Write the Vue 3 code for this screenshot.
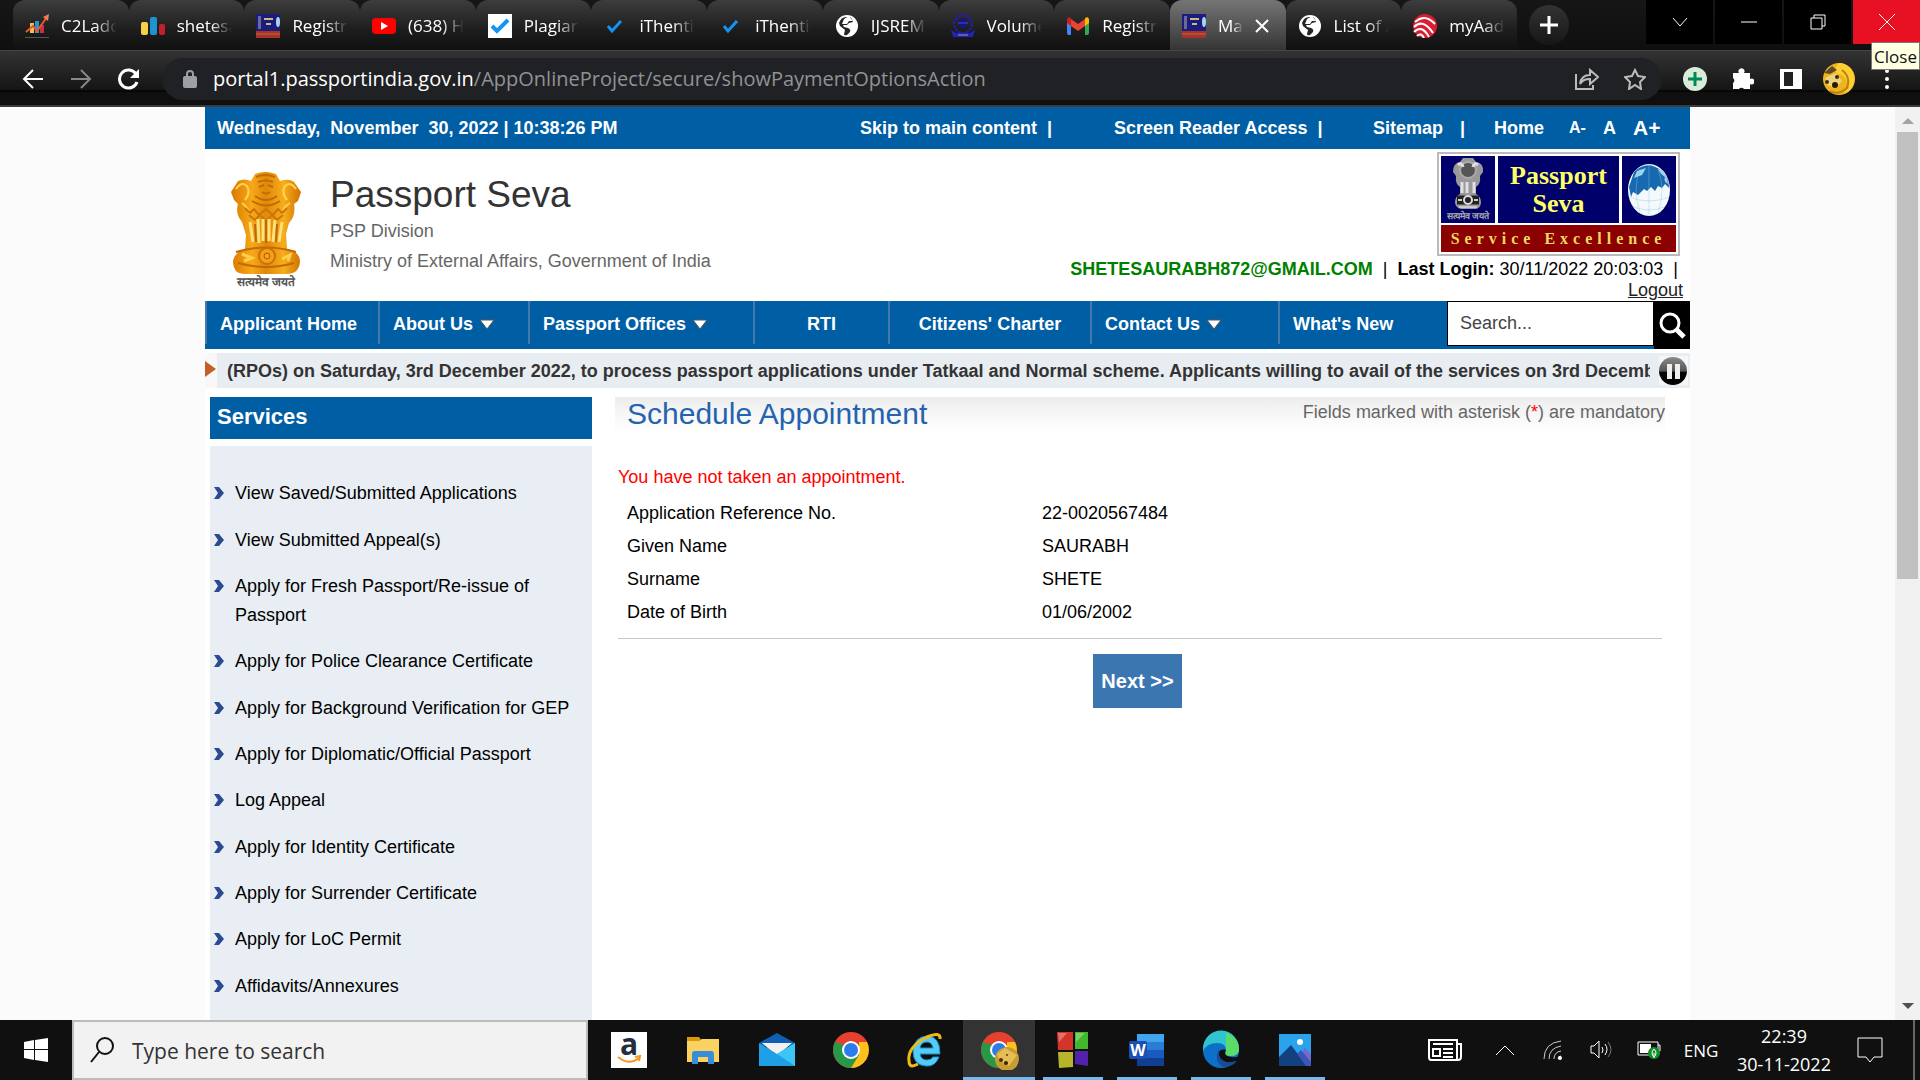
<script setup>
const tabs = [
  { title: 'C2Ladder', icon: 'chart' },
  { title: 'shetesaurabh', icon: 'bars' },
  { title: 'Registration', icon: 'seva' },
  { title: '(638) How to', icon: 'youtube' },
  { title: 'Plagiarism', icon: 'checkbox' },
  { title: 'iThenticate', icon: 'check' },
  { title: 'iThenticate', icon: 'check' },
  { title: 'IJSREM Journal', icon: 'globe' },
  { title: 'Volume 6', icon: 'crest' },
  { title: 'Registration', icon: 'gmail' },
  { title: 'Ma', icon: 'seva', active: true },
  { title: 'List of Annexures', icon: 'globe' },
  { title: 'myAadhaar', icon: 'aadhaar' },
]

const nav = [
  { label: 'Applicant Home' },
  { label: 'About Us', menu: true },
  { label: 'Passport Offices', menu: true },
  { label: 'RTI', wide: 'rti' },
  { label: "Citizens' Charter", wide: 'charter' },
  { label: 'Contact Us', menu: true },
  { label: "What's New" },
]

const services = [
  'View Saved/Submitted Applications',
  'View Submitted Appeal(s)',
  'Apply for Fresh Passport/Re-issue of Passport',
  'Apply for Police Clearance Certificate',
  'Apply for Background Verification for GEP',
  'Apply for Diplomatic/Official Passport',
  'Log Appeal',
  'Apply for Identity Certificate',
  'Apply for Surrender Certificate',
  'Apply for LoC Permit',
  'Affidavits/Annexures',
]

const details = [
  ['Application Reference No.', '22-0020567484'],
  ['Given Name', 'SAURABH'],
  ['Surname', 'SHETE'],
  ['Date of Birth', '01/06/2002'],
]

const apps = [
  { name: 'Amazon', icon: 'amazon' },
  { name: 'File Explorer', icon: 'folder' },
  { name: 'Mail', icon: 'mail' },
  { name: 'Chrome', icon: 'chrome' },
  { name: 'Internet Explorer', icon: 'ie' },
  { name: 'Chrome window', icon: 'chrome', state: 'current', badge: true },
  { name: 'Panes', icon: 'panes', state: 'open' },
  { name: 'Word', icon: 'word', state: 'open' },
  { name: 'Edge', icon: 'edge', state: 'open' },
  { name: 'Photos', icon: 'photos', state: 'open' },
]
</script>

<template>
  <div class="screen">
    <header class="browser">
      <div class="tabstrip">
        <div class="tabs">
          <div v-for="(tab, i) in tabs" :key="i" class="tab" :class="{ active: tab.active }">
            <svg class="favicon" viewBox="0 0 24 24" aria-hidden="true">
              <template v-if="tab.icon === 'chart'">
                <path d="M0 23.500h24" stroke="#555" />
                <path d="M5 9h4v10H5z" fill="#f2c14b" /><path d="M10 7h4v12h-4z" fill="#2496d4" /><path d="M15 11h4v8h-4z" fill="#c8323c" />
                <path d="M1 18l7-6 4 5L22 3" fill="none" stroke="#e8582c" stroke-width="2" /><path d="M18 3l6-3-1 7z" fill="#f08050" />
              </template>
              <template v-else-if="tab.icon === 'bars'">
                <rect x="0" y="8" width="7" height="13" rx="2" fill="#f8cf4a" /><rect x="9" y="3" width="7" height="18" rx="2" fill="#1f93d0" /><rect x="18" y="10" width="6" height="11" rx="2" fill="#c01f2c" />
              </template>
              <template v-else-if="tab.icon === 'seva'">
                <path d="M0 0h24v17H0z" fill="#1c1c7c" /><path d="M0 17h24v7H0z" fill="#a53328" />
                <path d="M2 2h3v13H2z" fill="#6a6a98" /><path d="M8 4h9v2H8zM10 9h5v2h-5z" fill="#c9bb83" /><ellipse cx="22" cy="8" rx="2" ry="5" fill="#a7d5f0" /><path d="M0 20h24" stroke="#c6683a" />
              </template>
              <template v-else-if="tab.icon === 'youtube'">
                <rect y="4" width="24" height="16" rx="4" fill="#f00" /><path d="M9 8l7 4-7 4z" fill="#fff" />
              </template>
              <template v-else-if="tab.icon === 'checkbox'">
                <path d="M0 0h24v24H0z" fill="#fff" /><path d="M4 12l5 5L20 6" fill="none" stroke="#1593f5" stroke-width="4" />
              </template>
              <path v-else-if="tab.icon === 'check'" d="M5 12l4 5 9-10" fill="none" stroke="#1593f5" stroke-width="3" />
              <template v-else-if="tab.icon === 'globe'">
                <circle cx="12" cy="12" r="11" fill="#fff" />
                <path d="M15 3q3 2 3 5l-4 1-2 2H8l1 2 4 1q3 1 2 4l-3 3q-3 1-3-1l1-4-5-4-1-3q2-6 7-6z" fill="#262626" />
                <path d="M14 2l-5 3-2 5h5l2-3h4z" fill="#fff" />
              </template>
              <template v-else-if="tab.icon === 'crest'">
                <circle cx="12" cy="10" r="9" fill="none" stroke="#2020a8" stroke-width="2" stroke-dasharray="3 1" /><circle cx="12" cy="9" r="5" fill="#171775" /><path d="M7 9h10" stroke="#2d2dbb" stroke-width="2" /><path d="M0 16l5 3h14l5-3-2 7H2z" fill="#2222b8" /><path d="M7 21h10" stroke="#99a" />
              </template>
              <template v-else-if="tab.icon === 'gmail'">
                <path d="M1 6l4 2v13H3a2 2 0 0 1-2-2z" fill="#4285f4" /><path d="M23 6l-4 2v13h2a2 2 0 0 0 2-2z" fill="#34a853" /><path d="M5 5l7 5 7-5v7l-7 5-7-5z" fill="#ea4335" /><path d="M1 6c0-4 4-3 4-1v7l-4-3z" fill="#c5221f" /><path d="M23 6c0-4-4-3-4-1v7l4-3z" fill="#fbbc04" />
              </template>
              <template v-else>
                <circle cx="12" cy="12" r="12" fill="#d81f32" /><path d="M2 8Q12-1 22 10M1 13q9-9 19 6M1 18q8-8 15 5M4 22q4-4 7 2" fill="none" stroke="#fff" stroke-width="2" />
              </template>
            </svg>
            <span class="tab-title">{{ tab.title }}</span>
            <button v-if="tab.active" class="tab-close" aria-label="Close tab">
              <svg width="14" height="14" viewBox="0 0 14 14"><path d="M1 1l12 12M13 1L1 13" stroke="#fff" stroke-width="2" /></svg>
            </button>
          </div>
        </div>
        <button class="new-tab" aria-label="New tab">
          <svg width="18" height="18" viewBox="0 0 18 18"><path d="M9 0v18M0 9h18" stroke="#fff" stroke-width="3" /></svg>
        </button>
        <div class="caption">
          <button aria-label="Search tabs"><svg width="16" height="16" viewBox="0 0 16 16"><path d="M1 4l7 8 7-8" /></svg></button>
          <button aria-label="Minimize"><svg width="16" height="16" viewBox="0 0 16 16"><path d="M0 8h16" /></svg></button>
          <button aria-label="Restore"><svg width="16" height="16" viewBox="0 0 16 16"><path d="M1 4h11v11H1zM4 4V1h11v11h-3" /></svg></button>
          <button class="close" aria-label="Close window"><svg width="16" height="16" viewBox="0 0 16 16"><path d="M0 0l16 16M16 0L0 16" /></svg></button>
          <span class="tooltip">Close</span>
        </div>
      </div>

      <div class="toolbar">
        <button aria-label="Back"><svg width="22" height="20" viewBox="0 0 22 20"><path d="M21 10H3M11 1l-9 9 9 9" fill="none" stroke="#fff" stroke-width="2" /></svg></button>
        <button aria-label="Forward"><svg width="22" height="20" viewBox="0 0 22 20"><path d="M1 10h18M11 1l9 9-9 9" fill="none" stroke="#888" stroke-width="2" /></svg></button>
        <button aria-label="Reload"><svg width="22" height="22" viewBox="0 0 22 22"><path d="M19 14a9 9 0 1 1-1-8" fill="none" stroke="#fff" stroke-width="3" /><path d="M21 1v9h-9z" fill="#fff" /></svg></button>
        <div class="omnibox">
          <svg width="14" height="18" viewBox="0 0 14 18"><rect y="6" width="14" height="12" rx="2" fill="#9aa0a6" /><path d="M4 7V4a3 3 0 0 1 6 0v3" fill="none" stroke="#9aa0a6" stroke-width="2" /></svg>
          <div class="url" role="textbox" aria-label="Address" contenteditable="true"><b>portal1.passportindia.gov.in</b>/AppOnlineProject/secure/showPaymentOptionsAction</div>
          <button aria-label="Share"><svg width="24" height="22" viewBox="0 0 24 22"><path d="M1 6v15h17v-4M5 16c1-7 5-9 10-9V2l8 7-8 7v-5c-5 0-7 1-10 5z" fill="none" stroke="#bbb" stroke-width="2" /></svg></button>
          <button aria-label="Bookmark"><svg width="22" height="22" viewBox="0 0 22 22"><path d="M11 2l3 6 7 1-5 5 1 7-6-4-6 4 1-7-5-5 7-1z" fill="none" stroke="#bbb" stroke-width="2" /></svg></button>
        </div>
        <div class="extensions">
          <button aria-label="Add extension"><svg width="24" height="24" viewBox="0 0 24 24"><circle cx="12" cy="12" r="12" fill="#d9ecd9" /><path d="M12 5v14M5 12h14" stroke="#00875a" stroke-width="3" /></svg></button>
          <button aria-label="Extensions"><svg width="22" height="22" viewBox="0 0 22 22"><path d="M1 5h6a3 3 0 1 1 5 0h6v6a3 3 0 1 1 0 5v5h-6a3 3 0 0 0-5 0H1v-6a3 3 0 0 0 0-5z" fill="#fff" /></svg></button>
          <button aria-label="Side panel"><svg width="22" height="22" viewBox="0 0 22 22"><path d="M0 1h22v20H0z" fill="#fff" /><path d="M4 4h9v14H4z" fill="#222" /></svg></button>
          <button aria-label="Profile"><svg width="34" height="34" viewBox="0 0 34 34"><circle cx="17" cy="17" r="16" fill="#eeb41c" /><path d="M17 1a16 16 0 0 1 5 31c8-10 0-20-5-20s-4-8 0-11z" fill="#ffcf32" /><path d="M2 11l8-7 5 4-7 4z" fill="#5b4a2c" /><path d="M3 16l11-5 6 8-6 7-9-3z" fill="#ecd27e" /><circle cx="5" cy="20" r="2" fill="#3d2b12" /><circle cx="13" cy="23" r="3" fill="#2b1808" /><circle cx="15" cy="15" r="2" fill="#3d2b12" /><path d="M8 29q9 5 18-4M20 8q9 7 5 18" fill="none" stroke="#b9810f" stroke-width="2" /></svg></button>
          <button aria-label="Menu"><svg width="6" height="22" viewBox="0 0 6 22"><circle cx="3" cy="3" r="2" fill="#fff" /><circle cx="3" cy="11" r="2" fill="#fff" /><circle cx="3" cy="19" r="2" fill="#fff" /></svg></button>
        </div>
      </div>
    </header>

    <div class="viewport">
      <div class="page">
        <div class="topbar">
          <span class="today">Wednesday,&nbsp; November&nbsp; 30, 2022 | 10:38:26 PM</span>
          <div class="toplinks">
            <div><a href="#main">Skip to main content</a><i>|</i></div>
            <div><a href="#reader">Screen Reader Access</a><i>|</i></div>
            <div class="sitemap"><a href="#sitemap">Sitemap</a><i>|</i></div>
            <div><a href="#home">Home</a></div>
            <div><button class="small">A-</button></div>
            <div><button>A</button></div>
            <div><button class="large">A+</button></div>
          </div>
        </div>

        <div class="masthead">
          <div class="emblem">
            <svg width="72" height="102" viewBox="0 0 72 102" aria-hidden="true">
              <defs>
                <linearGradient id="gold" x1="0" x2="1"><stop offset="0" stop-color="#d87800" /><stop offset="0.300" stop-color="#f8a818" /><stop offset="0.500" stop-color="#e08808" /><stop offset="0.750" stop-color="#f7ad1c" /><stop offset="1" stop-color="#cf7200" /></linearGradient>
              </defs>
              <path d="M25 2q10-4 21 0l4 7q9-3 14 1l7 10-3 9-4 3q2 12-5 19l-3 11 1 15q13 3 13 12 0 7-5 11-5 3-29 3-25 0-29-3-4-4-4-11 1-8 12-12l1-14-4-13Q5 42 8 32l-4-4-3-8 7-11q6-3 13 0z" fill="url(#gold)" />
              <path d="M26 5q9-4 19 0M28 10q8-3 15 0M29 15l5-2M38 13l5 2M32 20q4 3 8 0M25 24q11 8 22 0M22 29q14 9 28 0" fill="none" stroke="#c06a08" stroke-width="2" />
              <path d="M6 17q5-8 11-3 4 7-2 14M66 17q-5-8-11-3-4 7 2 14M12 31q6 4 8 12M60 31q-7 4-8 12" fill="none" stroke="#ffd350" stroke-width="2" />
              <path d="M15 36l5 5 4-4 5 6 7-6 7 6 5-6 4 4 5-5M19 43l6 5 5-5 6 6 6-6 5 5 6-5" fill="none" stroke="#cd750a" stroke-width="2" />
              <path d="M20 50l3 20M28 47l1 24M33 47v22M39 47v22M45 48l-2 22M52 50l-3 20" stroke="#ffe27a" stroke-width="3" />
              <path d="M25 52l1 18M36 49v22M47 52l-1 18" stroke="#c06808" stroke-width="2" />
              <path d="M6 80q30-9 60 0M8 91q28 8 56 0" fill="none" stroke="#c06a04" stroke-width="2" />
              <circle cx="37" cy="84" r="8" fill="#f3a11a" stroke="#c87008" stroke-width="2" /><circle cx="37" cy="84" r="3" fill="none" stroke="#b45a00" />
              <path d="M12 82l10 4-8 3M52 87l8-4-2 6" fill="none" stroke="#ffd04c" stroke-width="3" />
            </svg>
            <span class="motto">सत्यमेव जयते</span>
          </div>
          <div class="brand">
            <h1>Passport Seva</h1>
            <p>PSP Division</p>
            <p>Ministry of External Affairs, Government of India</p>
          </div>
          <div class="account">
            <div class="seal">
              <div class="seal-emblem">
                <svg width="32" height="54" viewBox="0 0 32 54" aria-hidden="true">
                  <path d="M11 1h10l3 4q8 1 7 10l-3 4q1 8-4 11v7q5 2 5 9-1 6-6 6H9q-5-1-6-6 0-7 5-9v-7Q3 27 4 19l-3-4Q1 6 8 5z" fill="#999" />
                  <circle cx="16" cy="13" r="8" fill="#555" stroke="#aaa" stroke-width="2" /><path d="M6 8q4-3 5 2M26 8q-4-3-5 2M10 25v11M15 25v11M22 25v11" fill="none" stroke="#e0e0e0" stroke-width="3" />
                  <path d="M5 43h22" stroke="#222" stroke-width="9" /><circle cx="16" cy="43" r="4" fill="none" stroke="#ddd" stroke-width="2" /><path d="M6 43h4M22 43h4M7 50h18" stroke="#ccc" stroke-width="2" />
                </svg>
                <span>सत्यमेव जयते</span>
              </div>
              <div class="seal-name">Passport<br>Seva</div>
              <div class="seal-globe">
                <svg width="44" height="54" viewBox="0 0 44 54" aria-hidden="true">
                  <ellipse cx="22" cy="27" rx="21" ry="26" fill="#f4fafc" />
                  <path d="M7 9Q20-4 35 8q7 7 7 17l-4-4-3 4-4-2-3 5-4-4-4 4-3-2-6 6-5-3-2 5-2-10z" fill="#1769b0" />
                  <path d="M10 8l9-3-4 7-8 3zM31 5q9 5 10 16-5-3-3-7-6-4-7-9z" fill="#9fd3ed" />
                  <path d="M2 34q20 8 40 0M7 44q15 6 30 0M13 6q-8 21 0 43M31 6q8 21 0 43M22 1v52" fill="none" stroke="#8bc3e4" stroke-opacity="0.400" />
                </svg>
              </div>
              <div class="seal-line">Service Excellence</div>
            </div>
            <p class="login"><strong class="mail">SHETESAURABH872@GMAIL.COM</strong><i>|</i><strong>Last Login:</strong> 30/11/2022 20:03:03<i class="end">|</i></p>
            <a class="logout" href="#logout">Logout</a>
          </div>
        </div>

        <nav class="nav">
          <a v-for="item in nav" :key="item.label" href="#" :class="item.wide">
            {{ item.label }}
            <svg v-if="item.menu" width="16" height="12" viewBox="0 0 16 12"><path d="M1 1h14L8 10z" fill="#fff" stroke="#555" /></svg>
          </a>
          <form class="search" @submit.prevent>
            <input type="text" placeholder="Search..." aria-label="Search the site">
            <button aria-label="Search">
              <svg width="28" height="28" viewBox="0 0 28 28"><circle cx="12" cy="12" r="9" fill="none" stroke="#fff" stroke-width="3" /><path d="M18 18l8 8" stroke="#fff" stroke-width="5" /></svg>
            </button>
          </form>
        </nav>

        <div class="ticker">
          <svg class="pointer" width="12" height="20" viewBox="0 0 12 20"><path d="M0 0l11 8-11 8z" fill="#c2602a" /></svg>
          <div class="news"><span>(RPOs) on Saturday, 3rd December 2022, to process passport applications under Tatkaal and Normal scheme. Applicants willing to avail of the services on 3rd December 2022</span></div>
          <button aria-label="Pause">
            <svg width="29" height="29" viewBox="0 0 29 29"><defs><linearGradient id="knob" x2="0" y2="1"><stop offset="0" stop-color="#8b8b8b" /><stop offset="0.500" stop-color="#555" /><stop offset="0.550" stop-color="#050505" /><stop offset="1" stop-color="#000" /></linearGradient></defs><circle cx="14" cy="15" r="14" fill="url(#knob)" /><path d="M8 8h5v15H8zM16 8h5v15h-5z" fill="#eee" /></svg>
          </button>
        </div>

        <div class="columns">
          <aside class="services">
            <h2>Services</h2>
            <ul>
              <li v-for="item in services" :key="item">
                <svg width="10" height="12" viewBox="0 0 10 12"><path d="M0 0h5l5 6-5 6H0l4-6z" fill="#2b4a91" /></svg>
                <a href="#">{{ item }}</a>
              </li>
            </ul>
          </aside>

          <main id="main">
            <div class="title-row">
              <h2>Schedule Appointment</h2>
              <span>Fields marked with asterisk (<em>*</em>) are mandatory</span>
            </div>
            <p class="notice">You have not taken an appointment.</p>
            <table>
              <tbody>
                <tr v-for="[label, value] in details" :key="label">
                  <th scope="row">{{ label }}</th>
                  <td>{{ value }}</td>
                </tr>
              </tbody>
            </table>
            <hr>
            <div class="actions"><button class="next">Next &gt;&gt;</button></div>
          </main>
        </div>
      </div>

      <div class="scrollbar" aria-hidden="true">
        <svg width="12" height="7" viewBox="0 0 12 7"><path d="M0 7l6-6 6 6z" fill="#a3a3a3" /></svg>
        <div class="thumb"></div>
        <svg width="12" height="7" viewBox="0 0 12 7"><path d="M0 0h12L6 6z" fill="#505050" /></svg>
      </div>
    </div>

    <footer class="taskbar">
      <button class="start" aria-label="Start">
        <svg width="24" height="24" viewBox="0 0 24 24"><path d="M0 4l10-2v9H0zM11 2l13-2v11H11zM0 12h10v10L0 20zM11 12h13v12l-13-2z" fill="#fff" /></svg>
      </button>
      <label class="find">
        <svg width="24" height="26" viewBox="0 0 24 26"><circle cx="15" cy="9" r="8" fill="none" stroke="#111" stroke-width="2" /><path d="M9 15L1 25" stroke="#111" stroke-width="2" /></svg>
        <input type="text" placeholder="Type here to search" aria-label="Type here to search">
      </label>
      <div class="apps">
        <button v-for="app in apps" :key="app.name" :class="app.state" :aria-label="app.name">
          <svg width="40" height="40" viewBox="0 0 40 40">
            <template v-if="app.icon === 'amazon'">
              <path d="M2 2h36v36H2z" fill="#fff" />
              <text x="20" y="25" text-anchor="middle" class="amazon-a">a</text>
              <path d="M9 27q11 9 21 1" fill="none" stroke="#f79a1c" stroke-width="2" /><path d="M26 27l5-1-1 5" fill="none" stroke="#f79a1c" stroke-width="2" />
            </template>
            <template v-else-if="app.icon === 'folder'">
              <path d="M4 7h12l3 4H4z" fill="#dc9a08" /><path d="M4 11h12l3-2h17v23H4z" fill="#fbd161" />
              <path d="M9 34V24q0-3 3-3h16q3 0 3 3v10h-6v-7H15v7z" fill="#368ddb" />
            </template>
            <template v-else-if="app.icon === 'mail'">
              <path d="M2 13L20 3l18 10v3H2z" fill="#0f5fb2" /><path d="M5 13h30L20 26z" fill="#f1f1f1" /><path d="M2 13l18 11 18-11v23H2z" fill="#1f9fe6" /><path d="M38 13v23L20 24z" fill="#3cc6f5" />
            </template>
            <template v-else-if="app.icon === 'chrome'">
              <circle cx="20" cy="20" r="18" fill="#e8402f" /><path d="M4 12A18 18 0 0 0 20 38l8-13-8-8z" fill="#279847" /><path d="M36 12a18 18 0 0 1-16 26l8-13V12z" fill="#fcc11a" />
              <circle cx="20" cy="20" r="9" fill="#fff" /><circle cx="20" cy="20" r="7" fill="#2b7de9" />
              <template v-if="app.badge"><circle cx="28" cy="29" r="12" fill="#c79c32" /><path d="M18 24l8-6 12 7-8 11-9-5z" fill="#e6bd55" /><circle cx="22" cy="30" r="2" fill="#4a3010" /><circle cx="27" cy="33" r="2" fill="#3b2108" /><circle cx="28" cy="25" r="1" fill="#5a3a12" /></template>
            </template>
            <template v-else-if="app.icon === 'ie'">
              <path d="M35 24H15q1 6 7 6 4 0 6-3h6q-4 10-13 9Q8 35 8 21 9 7 22 6q13 0 13 18zM15 18h13q-1-6-6-6-6 0-7 6z" fill="#55ccf5" stroke="#168fd0" />
              <path d="M35 9Q36 1 22 7 2 17 4 31q0 8 9 3" fill="none" stroke="#f1ba13" stroke-width="3" />
            </template>
            <template v-else-if="app.icon === 'panes'">
              <path d="M4 2h16v18H5z" fill="#d5342a" /><path d="M22 2h13v17H22z" fill="#42b72c" /><path d="M5 22h15v15L6 38z" fill="#b9b52b" /><path d="M22 21h13v15l-13-2z" fill="#5322ab" /><path d="M5 3h9L6 12zM23 3h9l-9 9z" fill="#fff" fill-opacity="0.300" />
            </template>
            <template v-else-if="app.icon === 'word'">
              <path d="M10 4h27v8H10z" fill="#41a5ee" /><path d="M10 12h27v8H10z" fill="#2b7cd3" /><path d="M10 20h27v8H10z" fill="#185abd" /><path d="M10 28h27v8H10z" fill="#103f91" /><rect x="2" y="11" width="18" height="18" rx="2" fill="#1a50b4" /><text x="11" y="26" text-anchor="middle" class="word-w">W</text>
            </template>
            <template v-else-if="app.icon === 'edge'">
              <circle cx="20" cy="20" r="18" fill="#0d70c8" /><path d="M2 18A18 18 0 0 1 38 19q0 7-8 7c-8 0-7-4-5-6q0-7-9-7-10 0-14 8z" fill="#2fc4d0" /><path d="M25 3q13 5 13 16 0 7-8 7c-8 0-7-4-5-6z" fill="#5bdb6a" /><path d="M25 20c-7-2-9 4-6 9q5 6 17 2l3-5q-5 2-9 1-8-1-5-7z" fill="#101010" /><path d="M18 19q-6 12 4 18 9 0 14-6-15 4-18-6z" fill="#174d96" />
            </template>
            <template v-else>
              <path d="M4 4h32v32H4z" fill="#2aa3ec" /><path d="M26 36l3-19 7 7v12z" fill="#716bd0" /><path d="M4 27l12-12 16 21H4z" fill="#12417e" /><path d="M22 24l4-4 10 12v4h-5z" fill="#3c55b7" /><circle cx="25" cy="12" r="3" fill="#fff" />
            </template>
          </svg>
        </button>
      </div>
      <div class="tray">
        <button class="news-btn" aria-label="News"><svg width="36" height="24" viewBox="0 0 36 24"><path d="M2 2h28v20H4q-2 0-2-3zM30 6h4v13q0 3-3 3h-3M6 6h20M6 11h7v7H6zM16 11h10M16 15h10M16 19h10" fill="none" stroke="#fff" stroke-width="2" /></svg></button>
        <button aria-label="Hidden icons"><svg width="18" height="10" viewBox="0 0 18 10"><path d="M0 10l9-9 9 9" fill="none" stroke="#fff" stroke-width="1" /></svg></button>
        <button aria-label="Wi-Fi"><svg width="20" height="20" viewBox="0 0 20 20"><path d="M1 19Q1 3 18 1M6 19Q6 8 18 6M11 19q0-7 7-8M15 19q0-3 3-3" fill="none" stroke="#ccc" /><circle cx="17" cy="18" r="2" fill="#fff" /></svg></button>
        <button aria-label="Volume"><svg width="23" height="20" viewBox="0 0 23 20"><path d="M1 6h3l5-5v17l-5-5H1zM12 7q2 3 0 6M15 4q4 5 0 11" fill="none" stroke="#fff" /><path d="M18 2q6 8 0 15" fill="none" stroke="#777" /></svg></button>
        <button aria-label="Battery"><svg width="24" height="20" viewBox="0 0 24 20"><path d="M1 2h20v13H1zM21 5h2v6h-2" fill="none" stroke="#fff" /><path d="M3 4h11v9H3z" fill="#fff" /><circle cx="17" cy="13" r="6" fill="#128f2b" /><path d="M17 9q4 4 0 8-4-4 0-8zM17 13v5" fill="none" stroke="#fff" /></svg></button>
        <span class="lang">ENG</span>
        <span class="clock">22:39<br>30-11-2022</span>
        <button class="alerts" aria-label="Notifications"><svg width="26" height="26" viewBox="0 0 26 26"><path d="M1 1h24v19h-8l-4 5-4-5H1z" fill="none" stroke="#fff" stroke-width="1" /></svg></button>
      </div>
    </footer>
  </div>
</template>

<style>
body { margin: 0; background: #fbfbfb; }
</style>

<style scoped>
* { box-sizing: border-box; }
button { padding: 0; border: 0; background: none; font: inherit; color: inherit; display: flex; align-items: center; justify-content: center; }
a { color: inherit; text-decoration: none; }
h1, h2, p, ul { margin: 0; padding: 0; font-weight: 400; }
i, em { font-style: normal; }
svg { display: block; flex: none; }

.screen { height: 100vh; display: flex; flex-direction: column; overflow: hidden; font-family: "Liberation Sans", Arial, sans-serif; font-size: 18px; color: #000; }

/* browser frame */
.browser { flex: none; font-family: "Open Sans", "Noto Sans", sans-serif; color: #fff; background: #111; border-bottom: 2px solid #3b3b3b; }
.tabstrip { display: flex; height: 50px; padding-left: 13px; background: linear-gradient(#161616, #0f0f0f); }
.tabs { display: flex; flex: 1 1 0; min-width: 0; }
.tab { position: relative; flex: 1 1 0; min-width: 0; height: 50px; padding: 1px 12px 0; display: flex; align-items: center; gap: 12px; border-radius: 12px 12px 0 0; background: linear-gradient(#3d3d3d, #1d1d1d 60%, #101010); }
.tab::after { content: ""; position: absolute; right: -1px; top: 12px; width: 1px; height: 30px; background: #5c5c5c; }
.tab.active { background: linear-gradient(#757575, #353535); }
.tab.active::after, .tab:last-child::after { display: none; }
.favicon { width: 24px; height: 24px; }
.tab-title { flex: 1; min-width: 0; overflow: hidden; white-space: nowrap; font-size: 17px; line-height: 24px; -webkit-mask-image: linear-gradient(90deg, #000 60%, transparent); mask-image: linear-gradient(90deg, #000 60%, transparent); }
.tab-close { width: 14px; margin-right: 5px; }
.new-tab { flex: none; width: 40px; height: 40px; margin: 5px 77px 0 12px; border-radius: 50%; background: linear-gradient(#333, #161616); }
.caption { position: relative; display: flex; gap: 2px; height: 44px; }
.caption button { width: 67px; background: #000; }
.caption svg { fill: none; stroke: #fff; }
.caption .close { background: #e81123; }
.tooltip { position: absolute; z-index: 2; right: 0; top: 42px; width: 49px; height: 28px; border: 1px solid #777; background: #ffffe1; color: #111; text-align: center; font-size: 17px; line-height: 27px; }
.toolbar { display: flex; align-items: center; height: 55px; padding: 2px 9px 0; border-top: 1px solid #444; background: linear-gradient(#333, #151515 72%, #000 74%, #0f0f0f 77%); }
.toolbar > button { width: 48px; height: 42px; }
.omnibox { flex: 1; min-width: 0; height: 42px; margin: 0 9px; padding: 0 11px 0 21px; border-radius: 21px; background: #202124; display: flex; align-items: center; gap: 16px; }
.omnibox button { width: 32px; }
.url { flex: 1; min-width: 0; overflow: hidden; white-space: nowrap; font-size: 20px; line-height: 28px; color: #909296; }
.url b { font-weight: 400; color: #fff; }
.extensions { display: flex; }
.extensions button { width: 48px; height: 42px; }

/* page area */
.viewport { flex: 1; min-height: 0; display: flex; background: #fbfbfb; }
.page { flex: 1; min-width: 0; margin: 0 205px; background: #fff; overflow: hidden; }
.scrollbar { width: 25px; background: #f1f1f1; padding: 10px 2px; display: flex; flex-direction: column; align-items: center; gap: 8px; }
.scrollbar .thumb { width: 100%; height: 50%; margin-bottom: auto; background: #c1c1c1; }

.topbar { height: 42px; padding-left: 12px; display: flex; align-items: center; justify-content: space-between; background: #005ea5; color: #fff; font-weight: 700; white-space: nowrap; }
.toplinks { display: grid; grid-template-columns: 254px 259px 121px 75px 34px 30px 57px; align-items: center; }
.toplinks i { margin-left: 10px; }
.toplinks .sitemap i { margin-left: 17px; }
.small { font-size: 16px; }
.large { font-size: 21px; }

.masthead { display: flex; height: 152px; }
.emblem { width: 125px; padding: 23px 0 0 25px; }
.motto { display: block; width: 72px; text-align: center; font-size: 12px; line-height: 16px; color: #555; font-weight: 700; white-space: nowrap; }
.brand { padding-top: 24px; color: #666; }
.brand h1 { font-size: 37px; line-height: 43px; color: #333; }
.brand p { line-height: 30px; }
.account { margin-left: auto; padding: 3px 7px 0 0; display: flex; flex-direction: column; align-items: flex-end; }
.seal { width: 243px; height: 104px; margin-right: 3px; border: 2px solid #bbb; padding: 2px; display: grid; grid-template-columns: 54px 1fr 54px; grid-template-rows: 67px 1fr; gap: 2px 3px; background: #fff; color: #ffff66; font: 700 26px/28px "Liberation Serif", serif; }
.seal > div { background: #00006b; text-align: center; overflow: hidden; display: flex; align-items: center; justify-content: center; }
.seal .seal-emblem { flex-direction: column; color: #aaa; font-size: 9px; line-height: 11px; white-space: nowrap; }
.seal .seal-line { grid-column: 1 / -1; background: #8b0000; color: #f5d860; font-size: 16px; letter-spacing: 5px; white-space: nowrap; }
.login { margin: 3px 5px 0 0; line-height: 21px; white-space: nowrap; }
.login .mail { color: #008000; }
.login i { margin: 0 10px; }
.login .end { margin-right: 0; }
.logout { line-height: 21px; text-decoration: underline; color: #222; }

.nav { display: grid; grid-template-columns: 173fr 150fr 225fr 135fr 202fr 188fr 169fr 243fr; height: 48px; background: #005ea5; color: #fff; font-weight: 700; white-space: nowrap; }
.nav a { height: 43px; padding: 4px 0 0 13px; display: flex; align-items: center; gap: 6px; border-left: 2px solid #4579ab; }
.nav .rti, .nav .charter { justify-content: center; padding-left: 0; }
.search { display: flex; min-width: 0; font-weight: 400; }
.search input { flex: 1; min-width: 0; height: 45px; border: 1px solid #000; padding: 0 12px; font: inherit; background: #fff; border-radius: 0; }
.search input::placeholder { color: #444; opacity: 1; }
.search button { width: 36px; height: 48px; background: #000; }

.ticker { display: flex; align-items: center; height: 35px; margin-top: 4px; padding-right: 2px; background: linear-gradient(90deg, #f8f8f8 12px, #e8edf2 12px); }
.news { flex: 1; min-width: 0; margin: 0 9px 0 10px; overflow: hidden; white-space: nowrap; font-weight: 700; line-height: 26px; color: #333; }
.ticker button { background: #f6f6f6; }

.columns { display: flex; padding: 9px 25px 0 5px; }
.services { flex: none; width: 382px; }
.services h2 { height: 42px; padding-left: 7px; background: #005ea5; color: #fff; font-size: 22px; line-height: 40px; font-weight: 700; }
.services ul { list-style: none; margin-top: 7px; padding: 33px 16px 18px 4px; background: #e8eef3; }
.services li { display: flex; gap: 11px; line-height: 29px; margin-bottom: 17px; }
.services li:nth-child(3n + 1) { margin-bottom: 18px; }
.services li svg { margin-top: 8px; }
main { flex: 1; min-width: 0; margin-left: 23px; }
.title-row { display: flex; justify-content: space-between; height: 36px; padding-left: 12px; background: linear-gradient(#ececec, #f5f5f5 40%, #fff); line-height: 30px; color: #666; }
.title-row h2 { font-size: 30px; line-height: 33px; color: #2563ae; }
em { color: #f00; }
.notice { margin: 31px 3px 0; line-height: 26px; color: #f00; }
table { width: 100%; margin-top: 7px; border-collapse: collapse; }
th, td { height: 33px; padding: 0; text-align: left; font-weight: 400; }
th { width: 427px; padding-left: 12px; }
hr { margin: 9px 3px 15px; border: 0; border-top: 1px solid #c8c8c8; }
.actions { display: flex; justify-content: center; padding-right: 5px; }
.next { width: 89px; height: 54px; background: #3c76b1; color: #fff; font-size: 20px; font-weight: 700; white-space: nowrap; }

/* taskbar */
.taskbar { flex: none; height: 60px; display: flex; background: #101010; color: #fff; font-family: "Open Sans", "Noto Sans", sans-serif; }
.start { width: 72px; }
.find { flex: none; width: 516px; border: 2px solid #bcbcbc; background: #f2f2f2; display: flex; align-items: center; gap: 18px; padding-left: 16px; }
.find input { flex: 1; min-width: 0; border: 0; padding: 2px 0 0; background: none; font: inherit; font-size: 21px; outline: 0; }
.find input::placeholder { color: #333; opacity: 1; }
.apps { display: flex; gap: 2px; margin-left: 5px; }
.apps button { position: relative; width: 72px; }
.apps .current { background: #333; }
.apps .current::after, .apps .open::after { content: ""; position: absolute; bottom: 0; left: 6px; right: 6px; height: 3px; background: #76b9ed; }
.apps .current::after { left: 0; right: 0; }
.amazon-a { font: 700 30px "Open Sans", sans-serif; fill: #232f3e; }
.word-w { font: 700 16px "Open Sans", sans-serif; fill: #fff; }
.tray { margin-left: auto; display: flex; align-items: center; }
.tray button { width: 48px; height: 60px; }
.tray .news-btn { width: 72px; }
.lang { width: 56px; text-align: center; font-size: 17px; }
.clock { width: 110px; text-align: center; font-size: 18px; line-height: 28px; }
.tray .alerts { width: 76px; padding-left: 18px; justify-content: flex-start; border-right: 2px solid #666; margin-right: 5px; }
</style>
